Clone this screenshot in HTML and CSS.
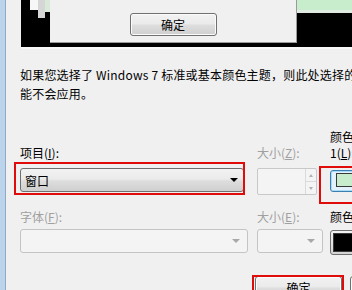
FILE: index.html
```html
<!DOCTYPE html>
<html lang="zh-CN">
<head>
    <meta charset="UTF-8">
    <title>窗口颜色和外观</title>
    <link rel="stylesheet" href="styles.css">
</head>
<body>
    <div class="window">
        <div class="edge"></div>
        <div class="dialog">
            <!-- 预览区 -->
            <div class="preview">
                <div class="pv-back"></div>
                <div class="pv-mid"></div>
                <div class="pv-line"></div>
                <div class="pv-msg"><span class="btn pv-ok">确定</span></div>
                <div class="pv-active"></div>
            </div>

            <p class="note">如果您选择了 Windows 7 标准或基本颜色主题，则此处选择的<br>能不会应用。</p>

            <div class="fields">
                <label class="lbl">项目(<u>I</u>):</label>
                <label class="lbl off col2">大小(<u>Z</u>):</label>
                <label class="lbl">颜色<br>1(<u>L</u>):</label>

                <div class="combo mark">窗口<span class="arrow"></span></div>
                <div class="spin off col2">
                    <span class="spin-btns"><i class="up"></i><i class="down"></i></span>
                </div>
                <div class="swatch-btn focus mark"><span class="swatch green"></span></div>

                <label class="lbl off row2">字体(<u>F</u>):</label>
                <label class="lbl off row2 col2">大小(<u>E</u>):</label>
                <label class="lbl row2">颜色</label>

                <div class="combo off wide"><span class="arrow"></span></div>
                <div class="combo off small col2"><span class="arrow"></span></div>
                <div class="swatch-btn plain"><span class="swatch black"></span></div>
            </div>

            <div class="buttons">
                <button class="btn ok mark">确定</button>
                <button class="btn">取消</button>
            </div>
        </div>
    </div>
</body>
</html>
```

FILE: styles.css
```css
body {
    margin: 0;
    width: 352px;
    height: 290px;
    overflow: hidden;
    background: #f0f0f0;
    font-family: "Noto Sans CJK SC", "Liberation Sans", sans-serif;
    font-size: 12px;
    color: #000;
}

.window {
    display: flex;
    height: 290px;
}

.edge {
    flex: none;
    width: 5px;
    background: #bcd3ec;
    border-right: 1px solid #8fa9c6;
}

.dialog {
    flex: 1;
    min-width: 0;
    padding-left: 14px;
}

/* preview */
.preview {
    display: flex;
    align-items: flex-start;
    height: 47px;
    margin-left: 1px;
    background: #000;
    border-bottom: 2px solid #f8f8f8;
    overflow: hidden;
}

.pv-back {
    flex: none;
    width: 8px;
    height: 10px;
    margin-left: 9px;
    background: #f7f7f7;
}

.pv-mid {
    flex: none;
    width: 7px;
    height: 18px;
    background: #d6d6d6;
}

.pv-line {
    flex: none;
    width: 5px;
    height: 12px;
    background: #d9e9d9;
}

.pv-msg {
    flex: none;
    box-sizing: border-box;
    width: 247px;
    height: 43px;
    padding-top: 13px;
    display: flex;
    justify-content: center;
    align-items: flex-start;
    background: #f0f0f0;
    border-right: 1px solid #9a9a9a;
    border-bottom: 1px solid #9a9a9a;
}

.pv-ok {
    width: 71px;
    height: 24px;
}

.pv-active {
    flex: 1;
    height: 10px;
    background: #c7edcc;
    border-bottom: 3px solid #e2ebe2;
}

/* note */
.note {
    margin: 16px 0 0;
    line-height: 19px;
    letter-spacing: 0.2px;
    white-space: nowrap;
}

/* fields */
.fields {
    display: grid;
    grid-template-columns: 228px 82px 1fr;
    margin-top: 26px;
}

.lbl {
    align-self: end;
    margin-bottom: 7px;
    line-height: 16px;
    white-space: nowrap;
}

.lbl.row2 {
    align-self: start;
    margin-top: 14px;
    margin-bottom: 4px;
}

.off {
    color: #a0a0a0;
}

.col2 {
    margin-left: 9px;
}

.combo {
    box-sizing: border-box;
    display: flex;
    align-items: center;
    justify-content: space-between;
    width: 224px;
    height: 24px;
    padding: 0 5px 0 4px;
    border: 1px solid #707070;
    border-radius: 3px;
    background: linear-gradient(#f2f2f2 0%, #ebebeb 45%, #dddddd 55%, #cfcfcf 100%);
}

.arrow {
    margin-left: auto;
    width: 0;
    height: 0;
    border-left: 4px solid transparent;
    border-right: 4px solid transparent;
    border-top: 4px solid #000;
}

.combo.off {
    padding-right: 7px;
    border-color: #c4c4c4;
    background: #f4f4f4;
}

.combo.off .arrow {
    border-top-color: #a8a8a8;
}

.combo.wide {
    width: 228px;
}

.combo.small {
    width: 66px;
}

.spin {
    box-sizing: border-box;
    display: flex;
    justify-content: flex-end;
    width: 60px;
    height: 27px;
    border: 1px solid #c8c8c8;
    border-radius: 2px;
    background: #f4f4f4;
}

.spin-btns {
    display: flex;
    flex-direction: column;
    width: 10px;
    border-left: 1px solid #dadada;
}

.spin-btns i {
    flex: 1;
    display: flex;
    align-items: center;
    justify-content: center;
}

.spin-btns i.up {
    border-bottom: 1px solid #dadada;
}

.spin-btns i::before {
    content: "";
    border-left: 2px solid transparent;
    border-right: 2px solid transparent;
}

.spin-btns i.up::before {
    border-bottom: 3px solid #b0b0b0;
}

.spin-btns i.down::before {
    border-top: 3px solid #b0b0b0;
}

.swatch-btn {
    box-sizing: border-box;
    display: flex;
    width: 44px;
    border-radius: 3px;
}

.swatch-btn.focus {
    height: 22px;
    margin-top: 2px;
    padding: 2px 5px 4px;
    border: 1px solid #3c7fb1;
    background: #e3f2fc;
    box-shadow: inset 0 0 0 1px #a9dbf6;
}

.swatch-btn.plain {
    height: 25px;
    margin-top: 1px;
    padding: 2px 0 2px 2px;
    border: 1px solid #707070;
    background: linear-gradient(#f2f2f2, #d4d4d4);
}

.swatch {
    flex: 1;
    border: 1px solid #3a3a3a;
}

.swatch.green {
    background: #c7edcc;
}

.swatch.black {
    background: #000;
}

/* buttons */
.buttons {
    display: flex;
    gap: 8px;
    margin-top: 21px;
    padding-left: 235px;
}

.btn {
    box-sizing: border-box;
    display: flex;
    align-items: center;
    justify-content: center;
    flex: none;
    width: 87px;
    height: 23px;
    padding: 0;
    border: 1px solid #707070;
    border-radius: 3px;
    background: linear-gradient(#f2f2f2 0%, #ebebeb 45%, #dddddd 55%, #cfcfcf 100%);
    box-shadow: inset 0 0 0 1px #fbfbfb;
    font: inherit;
    color: #000;
}

/* red highlight boxes */
.mark {
    position: relative;
}

.mark::after {
    content: "";
    position: absolute;
    border: 2px solid #e00c0c;
    pointer-events: none;
}

.combo.mark::after {
    top: -7px;
    left: -7px;
    right: -2px;
    bottom: -4px;
}

.swatch-btn.mark::after {
    top: -5px;
    left: -12px;
    right: -20px;
    bottom: -13px;
}

.btn.mark::after {
    top: -2px;
    left: -4px;
    right: -3px;
    bottom: -10px;
}
```
